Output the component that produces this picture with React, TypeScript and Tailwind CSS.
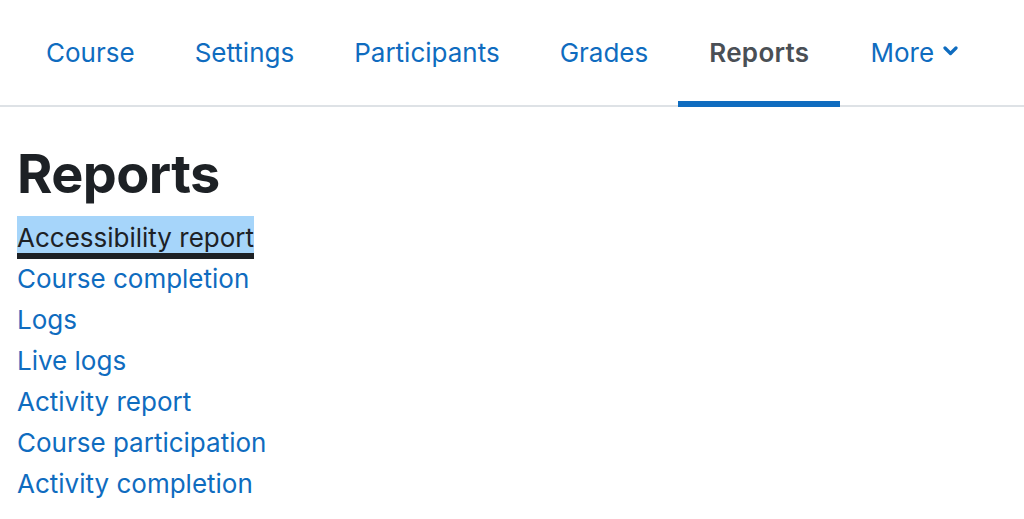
import React from "react";

const tabs = [
  { label: "Course" },
  { label: "Settings" },
  { label: "Participants" },
  { label: "Grades" },
  { label: "Reports", active: true },
];

const links = [
  "Accessibility report",
  "Course completion",
  "Logs",
  "Live logs",
  "Activity report",
  "Course participation",
  "Activity completion",
];

export default function App() {
  return (
    <div
      className="w-[1024px] h-[519px] bg-white overflow-hidden"
      style={{ fontFamily: "Inter, 'Noto Sans', sans-serif" }}
    >
      <nav className="flex h-[107px] border-b-2 border-[#dee2e6] pl-[16px]">
        {tabs.map((t) => (
          <a
            key={t.label}
            className={
              "h-[107px] -mb-[2px] flex items-center px-[30px] pt-[3px] border-b-[6px] text-[26px] leading-[41px] " +
              (t.active
                ? "border-[#0f6cbf] text-[#4a4f55] font-semibold px-[31px] tracking-[0.3px]"
                : "border-transparent text-[#0f6cbf]")
            }
          >
            {t.label}
          </a>
        ))}
        <a className="h-[107px] -mb-[2px] flex items-center px-[30px] pt-[3px] border-b-[6px] border-transparent text-[26px] leading-[41px] text-[#0f6cbf]">
          More
          <svg
            width="15"
            height="10"
            viewBox="0 0 15 10"
            className="ml-[9px] mb-[2px]"
          >
            <polyline
              points="2,2 7.5,7.5 13,2"
              fill="none"
              stroke="#0f6cbf"
              strokeWidth="3.2"
              strokeLinecap="round"
              strokeLinejoin="round"
            />
          </svg>
        </a>
      </nav>
      <main className="pl-[17px] pt-[34px]">
        <h2 className="text-[54px] leading-[66px] font-bold text-[#1d2125] tracking-[-0.6px] mb-[10px]">
          Reports
        </h2>
        <ul className="flex flex-col">
          {links.map((l, i) => (
            <li key={l} className="text-[26px] leading-[41px]">
              {i === 0 ? (
                <a className="text-[#1d2125] bg-[#a6d5fa] shadow-[0_-6px_0_#a6d5fa,0_6px_0_#1d2125]">
                  {l}
                </a>
              ) : (
                <a className="text-[#0f6cbf]">{l}</a>
              )}
            </li>
          ))}
        </ul>
      </main>
    </div>
  );
}
